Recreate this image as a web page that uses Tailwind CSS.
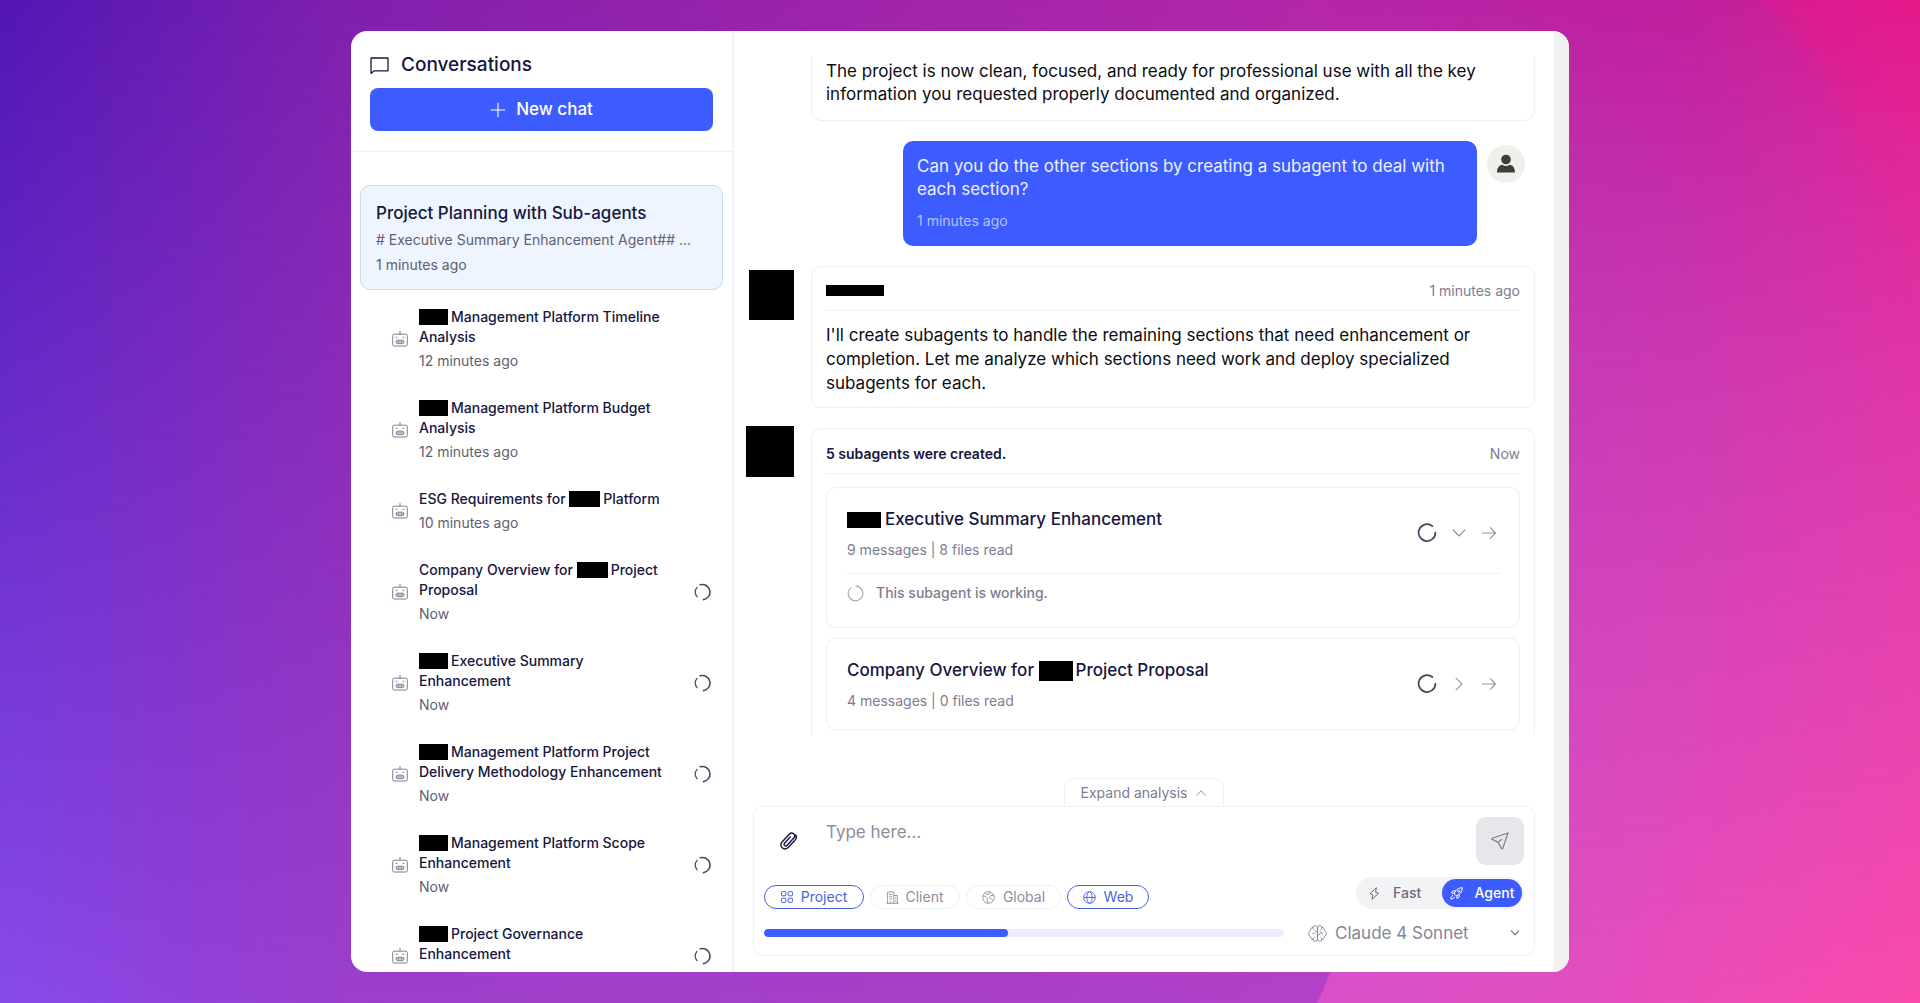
<!DOCTYPE html>
<html lang="en">
<head>
<meta charset="utf-8">
<meta name="viewport" content="width=device-width, initial-scale=1">
<title>Conversations</title>
<script src="https://cdn.jsdelivr.net/npm/@tailwindcss/browser@4"></script>
</head>
<body class="relative isolate h-screen overflow-hidden bg-[#a325ab] px-4 py-[31px] font-['Inter',sans-serif] text-[#16163f]">

<!-- Backdrop: violet to pink, brighter toward the bottom -->
<div class="absolute inset-0 -z-10 bg-[linear-gradient(to_right,#5216b4_0%,#681cb2_9%,#8020ae_18%,#9d24ab_43%,#b427a8_68%,#c0209f_88%,#cb2099_93%,#e41c8e_100%)]" aria-hidden="true">
  <div class="absolute top-0 right-0 h-[400px] w-[240px] bg-[radial-gradient(circle_at_-260px_330px,transparent_462px,#ea188870_488px)] mask-b-from-20% mask-b-to-100%"></div>
  <div class="absolute inset-0 bg-[linear-gradient(to_right,#874be9_0%,#9142da_10%,#9b3fcc_18%,#a840c6_50%,#b242c8_70%)] mask-[linear-gradient(transparent,black)]"></div>
  <div class="absolute inset-0 bg-[linear-gradient(to_right,#d850c8_69%,#e04fc0_81%,#ee4cb4_91%,#fa4aab_100%)] mask-[linear-gradient(transparent,black)] [clip-path:polygon(68.6%_100%,69.4%_96.5%,69.4%_0,100%_0,100%_100%)]"></div>
</div>

<svg class="hidden" aria-hidden="true">
  <symbol id="robot" viewBox="0 0 16 16" fill="none" stroke="currentColor">
    <rect x="0.7" y="3.2" width="14.6" height="11.8" rx="1.4"/>
    <path d="M8 0.3v2.9M4 6.3h1.2M10.8 6.3H12" stroke-linecap="round"/>
    <rect x="4" y="9.2" width="8" height="3.4" rx="1.5"/>
    <path d="M6.4 9.2v3.4M9.6 9.2v3.4M4 10.900h8" stroke-width="0.8"/>
  </symbol>
  <symbol id="spinner" viewBox="0 0 18 18" fill="none" stroke="currentColor" stroke-width="1.6" stroke-linecap="round">
    <path d="M6.2 1.8A7.6 7.6 0 1 1 9.5 16.6"/>
    <path d="M3.1 13.700A7.6 7.6 0 0 1 3 4.3" stroke-width="1.2"/>
  </symbol>
  <symbol id="spinner-open" viewBox="0 0 20 20" fill="none" stroke="currentColor" stroke-width="1.7" stroke-linecap="round">
    <path d="M15.4 3.2A8.4 8.4 0 1 0 18.4 9.6"/>
  </symbol>
  <symbol id="arrow" viewBox="0 0 16 16" fill="none" stroke="currentColor" stroke-width="1.1" stroke-linecap="round" stroke-linejoin="round">
    <path d="M1.5 8h13M9.3 2.6L14.5 8l-5.2 5.4"/>
  </symbol>
  <symbol id="chevron" viewBox="0 0 16 16" fill="none" stroke="currentColor" stroke-width="1.1" stroke-linecap="round" stroke-linejoin="round">
    <path d="M2.2 5L8 11l5.8-6"/>
  </symbol>
</svg>

<div class="mx-auto flex h-full w-full max-w-[1218px] overflow-hidden rounded-2xl bg-white">

  <!-- Sidebar -->
  <aside class="flex w-[383px] shrink-0 flex-col border-r-2 border-[#f2f2f4]">
    <header class="border-b border-[#eeeef1] px-[19px] pt-5 pb-5">
      <h1 class="flex items-center gap-3 text-[19px] leading-7 font-medium">
        <svg class="size-[19px]" viewBox="0 0 19 19" fill="none" stroke="currentColor" stroke-width="1.3" stroke-linejoin="round" aria-hidden="true"><path d="M1 2h17v12.800H4.200L1 17.400z"/></svg>
        Conversations
      </h1>
      <button type="button" class="mt-[9px] flex h-[43px] w-full items-center justify-center gap-2.5 rounded-lg bg-[#3c5cff] text-[17px] font-medium text-white">
        <svg class="size-4" viewBox="0 0 16 16" stroke="currentColor" stroke-width="1.1" aria-hidden="true"><path d="M8 .8v14.400M.8 8h14.400"/></svg>
        New chat
      </button>
    </header>

    <nav class="min-h-0 flex-1 overflow-hidden px-[9px] pt-[33px]" aria-label="Conversations">
      <a href="#" class="block rounded-[10px] border border-[#c5dcf0] bg-[#eef5ff] px-[15px] pt-[15px] pb-3.5">
        <span class="block text-[17px] leading-6 font-medium">Project Planning with Sub-agents</span>
        <span class="mt-[5px] block truncate text-sm text-[#5e6070]"># Executive Summary Enhancement Agent## ...</span>
        <span class="mt-[5px] block text-sm text-[#5e6070]">1 minutes ago</span>
      </a>
      <ul class="flex flex-col gap-[3px] pt-[5px]">
        <li><a href="#" class="flex items-center gap-[11px] py-3 pr-[11px] pl-8">
          <svg class="size-4 shrink-0 text-[#7e7e94]" aria-hidden="true"><use href="#robot"/></svg>
          <span class="flex-1 text-sm"><span class="block pr-8 font-medium"><span class="mr-[3px] inline-block h-4 w-[29px] bg-black align-[-3px]"></span>Management Platform Timeline Analysis</span><span class="mt-1 block text-[#5e6070]">12 minutes ago</span></span>
        </a></li>
        <li><a href="#" class="flex items-center gap-[11px] py-3 pr-[11px] pl-8">
          <svg class="size-4 shrink-0 text-[#7e7e94]" aria-hidden="true"><use href="#robot"/></svg>
          <span class="flex-1 text-sm"><span class="block pr-8 font-medium"><span class="mr-[3px] inline-block h-4 w-[29px] bg-black align-[-3px]"></span>Management Platform Budget Analysis</span><span class="mt-1 block text-[#5e6070]">12 minutes ago</span></span>
        </a></li>
        <li><a href="#" class="flex items-center gap-[11px] py-3 pr-[11px] pl-8">
          <svg class="size-4 shrink-0 text-[#7e7e94]" aria-hidden="true"><use href="#robot"/></svg>
          <span class="flex-1 text-sm"><span class="block pr-8 font-medium">ESG Requirements for <span class="mr-[3px] inline-block h-4 w-[31px] bg-black align-[-3px]"></span>Platform</span><span class="mt-1 block text-[#5e6070]">10 minutes ago</span></span>
        </a></li>
        <li><a href="#" class="flex items-center gap-[11px] py-3 pr-[11px] pl-8">
          <svg class="size-4 shrink-0 text-[#7e7e94]" aria-hidden="true"><use href="#robot"/></svg>
          <span class="flex-1 text-sm"><span class="block font-medium">Company Overview for <span class="mr-[3px] inline-block h-4 w-[31px] bg-black align-[-3px]"></span>Project Proposal</span><span class="mt-1 block text-[#5e6070]">Now</span></span>
          <svg class="size-[18px] shrink-0 text-[#4a4a62]" aria-hidden="true"><use href="#spinner"/></svg>
        </a></li>
        <li><a href="#" class="flex items-center gap-[11px] py-3 pr-[11px] pl-8">
          <svg class="size-4 shrink-0 text-[#7e7e94]" aria-hidden="true"><use href="#robot"/></svg>
          <span class="flex-1 text-sm"><span class="block font-medium"><span class="mr-[3px] inline-block h-4 w-[29px] bg-black align-[-3px]"></span>Executive Summary<br>Enhancement</span><span class="mt-1 block text-[#5e6070]">Now</span></span>
          <svg class="size-[18px] shrink-0 text-[#4a4a62]" aria-hidden="true"><use href="#spinner"/></svg>
        </a></li>
        <li><a href="#" class="flex items-center gap-[11px] py-3 pr-[11px] pl-8">
          <svg class="size-4 shrink-0 text-[#7e7e94]" aria-hidden="true"><use href="#robot"/></svg>
          <span class="flex-1 text-sm"><span class="block font-medium"><span class="mr-[3px] inline-block h-4 w-[29px] bg-black align-[-3px]"></span>Management Platform Project Delivery Methodology Enhancement</span><span class="mt-1 block text-[#5e6070]">Now</span></span>
          <svg class="size-[18px] shrink-0 text-[#4a4a62]" aria-hidden="true"><use href="#spinner"/></svg>
        </a></li>
        <li><a href="#" class="flex items-center gap-[11px] py-3 pr-[11px] pl-8">
          <svg class="size-4 shrink-0 text-[#7e7e94]" aria-hidden="true"><use href="#robot"/></svg>
          <span class="flex-1 text-sm"><span class="block font-medium"><span class="mr-[3px] inline-block h-4 w-[29px] bg-black align-[-3px]"></span>Management Platform Scope Enhancement</span><span class="mt-1 block text-[#5e6070]">Now</span></span>
          <svg class="size-[18px] shrink-0 text-[#4a4a62]" aria-hidden="true"><use href="#spinner"/></svg>
        </a></li>
        <li><a href="#" class="flex items-center gap-[11px] py-3 pr-[11px] pl-8">
          <svg class="size-4 shrink-0 text-[#7e7e94]" aria-hidden="true"><use href="#robot"/></svg>
          <span class="flex-1 text-sm"><span class="block font-medium"><span class="mr-[3px] inline-block h-4 w-[29px] bg-black align-[-3px]"></span>Project Governance<br>Enhancement</span><span class="mt-1 block text-[#5e6070]">Now</span></span>
          <svg class="size-[18px] shrink-0 text-[#4a4a62]" aria-hidden="true"><use href="#spinner"/></svg>
        </a></li>
      </ul>
    </nav>
  </aside>

  <!-- Chat -->
  <main class="flex min-w-0 flex-1 flex-col pt-[25px] pb-4">
    <section class="flex min-h-0 flex-1 flex-col gap-5 overflow-hidden pr-[19px] text-[17px] leading-[23px] text-[#0c0c12] *:shrink-0" aria-label="Messages">

      <article class="ml-[77px] rounded-b-[10px] border border-t-0 border-[#efeff1] px-3.5 pt-1 pb-3.5">
        <p>The project is now clean, focused, and ready for professional use with all the key information you requested properly documented and organized.</p>
      </article>

      <article class="flex items-start justify-end gap-2.5 pr-2.5">
        <div class="w-[574px] rounded-[10px] bg-[#3c5cff] px-3.5 pt-3.5 pb-[15px] text-[#eef1ff]">
          <p>Can you do the other sections by creating a subagent to deal with each section?</p>
          <p class="mt-2.5 text-sm text-[#b4c1ff]">1 minutes ago</p>
        </div>
        <span class="mt-1 flex size-[38px] items-center justify-center rounded-full bg-[#efefec]">
          <svg class="size-5" viewBox="0 0 20 20" fill="#3d3d39" aria-hidden="true"><circle cx="10" cy="5.500" r="4.800"/><path d="M1 18.500c0-4.800 2.300-7.400 5.300-7.700a6.500 6.500 0 0 0 7.400 0c3 .3 5.300 2.900 5.300 7.700z"/></svg>
        </span>
      </article>

      <article class="flex items-start">
        <div class="w-[77px] shrink-0 pt-1 pl-[15px]"><div class="h-[50px] w-[45px] bg-black"></div></div>
        <div class="min-w-0 flex-1 rounded-[10px] border border-[#efeff1] px-3.5 pt-[13px] pb-3">
          <header class="flex h-[31px] items-start justify-between border-b border-[#efeff1] text-sm leading-[21px]">
            <span class="mt-[5px] h-[11px] w-[58px] bg-black"></span>
            <time class="text-[#7d7d90]">1 minutes ago</time>
          </header>
          <p class="pt-3 leading-6">I'll create subagents to handle the remaining sections that need enhancement or completion. Let me analyze which sections need work and deploy specialized subagents for each.</p>
        </div>
      </article>

      <article class="flex items-start">
        <div class="-mt-0.5 w-[77px] shrink-0 pl-3"><div class="h-[51px] w-12 bg-black"></div></div>
        <div class="min-w-0 flex-1 rounded-t-[10px] border border-b-0 border-[#efeff1] px-3.5 pt-3.5 pb-10">
          <header class="flex h-[31px] items-start justify-between border-b border-[#efeff1] text-sm leading-[21px]">
            <h2 class="font-semibold text-[#16163f]">5 subagents were created.</h2>
            <time class="text-[#7d7d90]">Now</time>
          </header>

          <section class="mt-[13px] rounded-[10px] border border-[#efeff1] px-5 pt-[18px] pb-6">
            <div class="flex items-center justify-between">
              <div>
                <h3 class="leading-[26px] font-medium text-[#16163f]"><span class="mr-1 inline-block h-4 w-[34px] bg-black align-[-3px]"></span>Executive Summary Enhancement</h3>
                <p class="mt-2 text-sm text-[#7d7d90]">9 messages | 8 files read</p>
              </div>
              <div class="flex items-center gap-3.5 text-[#94949f]">
                <svg class="size-5 text-[#45455c]" aria-hidden="true"><use href="#spinner-open"/></svg>
                <button type="button" aria-label="Collapse"><svg class="size-4" aria-hidden="true"><use href="#chevron"/></svg></button>
                <button type="button" aria-label="Open subagent"><svg class="mr-0.5 size-4" aria-hidden="true"><use href="#arrow"/></svg></button>
              </div>
            </div>
            <p class="mt-[13px] flex items-center gap-3 border-t border-[#efeff1] pt-[9px] text-sm font-medium text-[#7d7d90]">
              <svg class="size-[17px] text-[#a5a5b2]" viewBox="0 0 18 18" fill="none" stroke="currentColor" stroke-width="1.200" stroke-linecap="round" aria-hidden="true"><path d="M9.500 1.200A7.800 7.800 0 1 1 4 3"/></svg>
              This subagent is working.
            </p>
          </section>

          <section class="mt-2.5 rounded-[10px] border border-[#efeff1] px-5 py-[18px]">
            <div class="flex items-center justify-between">
              <div>
                <h3 class="leading-[26px] font-medium text-[#16163f]">Company Overview for <span class="mr-[3px] inline-block h-5 w-[34px] bg-black align-[-5px]"></span>Project Proposal</h3>
                <p class="mt-2 text-sm text-[#7d7d90]">4 messages | 0 files read</p>
              </div>
              <div class="flex items-center gap-3.5 text-[#94949f]">
                <svg class="size-5 text-[#45455c]" aria-hidden="true"><use href="#spinner-open"/></svg>
                <button type="button" aria-label="Expand"><svg class="size-4 -rotate-90" aria-hidden="true"><use href="#chevron"/></svg></button>
                <button type="button" aria-label="Open subagent"><svg class="mr-0.5 size-4" aria-hidden="true"><use href="#arrow"/></svg></button>
              </div>
            </div>
          </section>
        </div>
      </article>
    </section>

    <!-- Composer -->
    <div class="flex flex-col items-center px-[19px] pt-[43px]">
      <button type="button" class="flex h-7 w-40 items-center justify-center gap-2 rounded-t-[10px] border border-b-0 border-[#efeff1] text-sm text-[#7d7d90]">
        Expand analysis
        <svg class="size-3 rotate-180" aria-hidden="true"><use href="#chevron"/></svg>
      </button>
      <form class="flex w-full flex-col gap-3 rounded-[10px] border border-[#efeff1] p-2.5">
        <div class="flex h-12">
          <button type="button" class="flex w-12 shrink-0 items-center justify-center" aria-label="Attach file">
            <svg class="size-5" viewBox="0 0 20 20" fill="none" stroke="currentColor" stroke-width="1.400" stroke-linecap="round" stroke-linejoin="round" aria-hidden="true"><path d="M17 9.300l-6.900 7.300a4.100 4.100 0 0 1-6.100-5.600L11.500 3a2.900 2.900 0 0 1 4.300 4l-6.900 7.400a1.600 1.600 0 0 1-2.400-2.200l5.700-6.200M17 9.300c1.400-1.600 1.700-3.800.6-5.300"/></svg>
          </button>
          <textarea class="min-w-0 flex-1 resize-none overflow-hidden pt-1 pl-3.5 text-[17px] leading-[23px] outline-none placeholder:text-[#8d8d9c]" placeholder="Type here..." aria-label="Message"></textarea>
          <button type="submit" class="flex w-12 items-center justify-center rounded-[10px] bg-[#e6e7ea] text-[#7d7d90]" aria-label="Send">
            <svg class="size-[18px]" viewBox="0 0 18 18" fill="none" stroke="currentColor" stroke-width="1.200" stroke-linejoin="round" stroke-linecap="round" aria-hidden="true"><path d="M17 1L1.200 6.200c-.5.2-.5.800-.1 1l6 3.200 3.600 6.300c.3.400.9.300 1-.1L17 1zM7.100 10.400l3.400-2.900"/></svg>
          </button>
        </div>
        <div class="flex items-end justify-between">
          <div class="flex gap-1.5 text-sm">
            <button type="button" aria-pressed="true" class="flex h-6 w-[100px] items-center justify-center gap-2 rounded-full border border-[#4a63dc] text-[#4a63dc]">
              <svg class="size-3" viewBox="0 0 12 12" fill="none" stroke="currentColor" aria-hidden="true"><rect x=".6" y=".6" width="4.200" height="4.200" rx=".6"/><rect x="7.200" y=".6" width="4.200" height="4.200" rx=".6"/><rect x=".6" y="7.200" width="4.200" height="4.200" rx=".6"/><rect x="7.200" y="7.200" width="4.200" height="4.200" rx=".6"/></svg>Project</button>
            <button type="button" aria-pressed="false" class="flex h-6 w-[90px] items-center justify-center gap-1.5 rounded-full border border-[#efeff1] text-[#8d8d9c]">
              <svg class="size-[13px]" viewBox="0 0 13 13" fill="none" stroke="currentColor" stroke-width=".9" aria-hidden="true"><path d="M.3 12.300h12.400M1.600 12.300V1h6.200v11.300M7.800 4.500h3.500v7.800M3.300 3.500h2.800M3.300 5.700h2.800M3.300 7.900h2.800M4.700 12.300v-2.200M9.600 6.500v1.300M9.600 9.300v1.300"/></svg>Client</button>
            <button type="button" aria-pressed="false" class="flex h-6 w-[95px] items-center justify-center gap-2 rounded-full border border-[#efeff1] text-[#8d8d9c]">
              <svg class="size-[13px]" viewBox="0 0 13 13" fill="none" stroke="currentColor" stroke-width=".9" stroke-linejoin="round" aria-hidden="true"><circle cx="6.500" cy="6.500" r="5.800"/><path d="M.9 5l2.600.3L5.600 7.400 5 9.200l1 2.900M3.300 1.700l1.600 2 2.400-.9.300-2M12 4.700l-3.100-.3-1.600 1.700 2 2 1.800 1.700"/></svg>Global</button>
            <button type="button" aria-pressed="true" class="flex h-6 w-[82px] items-center justify-center gap-2 rounded-full border border-[#4a63dc] text-[#4a63dc]">
              <svg class="size-[13px]" viewBox="0 0 13 13" fill="none" stroke="currentColor" stroke-width=".9" aria-hidden="true"><circle cx="6.500" cy="6.500" r="5.800"/><ellipse cx="6.500" cy="6.500" rx="2.600" ry="5.800"/><path d="M.7 6.500h11.600"/></svg>Web</button>
          </div>
          <fieldset class="flex h-8 items-center rounded-full bg-[#f2f3f5] pr-0.5 text-sm font-medium">
            <legend class="sr-only">Mode</legend>
            <label class="relative flex w-[86px] items-center gap-3 pl-3 text-[#6b6b7c]">
              <input type="radio" name="mode" class="absolute inset-0 appearance-none">
              <svg class="size-[13px]" viewBox="0 0 13 13" fill="none" stroke="currentColor" stroke-linejoin="round" aria-hidden="true"><path d="M8.400.7L2 6.700l2.800 1.200-.9 4.400 6.600-6L7.600 5.200z"/></svg>
              Fast
            </label>
            <label class="relative flex h-7 w-20 items-center justify-center gap-3 rounded-full bg-[#3c5cff] text-white">
              <input type="radio" name="mode" checked class="absolute inset-0 appearance-none">
              <svg class="size-[13px]" viewBox="0 0 13 13" fill="none" stroke="currentColor" stroke-linejoin="round" stroke-linecap="round" aria-hidden="true"><path d="M4.300 6.400C5.500 3 8 .8 12.300.7 12.200 5 10 7.500 6.600 8.700zM4.500 6.200L1.400 6 3.200 3.700l2.300.3M6.800 8.500l.2 3.100 2.300-1.800L9 7.500M2.700 8.400c-1.300.5-1.700 1.900-1.900 3.700 1.900-.2 3.300-.6 3.700-1.900"/><circle cx="8.700" cy="4.300" r=".9"/></svg>
              Agent
            </label>
          </fieldset>
        </div>
        <div class="flex h-6 items-center">
          <div class="h-2 flex-1 overflow-hidden rounded-full bg-[#ecebfd]" role="progressbar" aria-valuenow="47" aria-valuemin="0" aria-valuemax="100" aria-label="Context used">
            <div class="h-full rounded-full bg-[#3c5cff]" style="width:47%"></div>
          </div>
          <label class="relative ml-6 flex w-[216px] items-center text-[#85859a]">
            <span class="sr-only">Model</span>
            <svg class="size-[19px] shrink-0" viewBox="0 0 19 19" fill="none" stroke="currentColor" stroke-linecap="round" stroke-linejoin="round" aria-hidden="true"><path d="M9.500 3.300C9.100 1.900 8 1.500 7 1.600c-1.200.1-1.900.9-2 1.900-1.600 0-2.600 1.300-2.300 2.800C1.300 6.800.6 8.100.7 9.500s.8 2.600 2 3.100c-.2 1.600.9 2.900 2.400 2.900.3 1.300 1.200 1.900 2.200 1.900 1.200 0 2.200-.8 2.200-2.200zM9.500 3.300c.4-1.400 1.500-1.800 2.500-1.700 1.200.1 1.900.9 2 1.900 1.600 0 2.600 1.300 2.300 2.800 1.400.5 2.100 1.800 2 3.200s-.8 2.600-2 3.100c.2 1.600-.9 2.900-2.400 2.900-.3 1.300-1.200 1.900-2.200 1.900-1.200 0-2.200-.8-2.200-2.200zM9.500 8.200c-1 0-2-.4-2.400-1.200M9.500 11c1.300 0 2.400-.5 2.900-1.600M4.800 9.600c.9-.6 1.900-.4 2.500.4M14.200 9.600c-.3-1.100-1.100-1.800-2.200-1.900M5 3.500c0 .9.400 1.600 1.100 2M14 3.500c0 .9-.4 1.600-1.100 2M5.100 15.500c0-.9.300-1.600 1-2.100M13.900 15.500c0-.9-.3-1.600-1-2.100"/></svg>
            <select class="ml-2 w-full appearance-none text-[17px] leading-6 outline-none"><option>Claude 4 Sonnet</option></select>
            <svg class="pointer-events-none absolute right-1 size-2.5" viewBox="0 0 10 10" fill="none" stroke="currentColor" stroke-width="1.300" stroke-linecap="round" stroke-linejoin="round" aria-hidden="true"><path d="M1.400 3L5 6.800 8.600 3"/></svg>
          </label>
        </div>
      </form>
    </div>
  </main>

  <!-- Scrollbar track -->
  <div class="w-[15px] shrink-0 bg-[#f1f1f1]" aria-hidden="true"></div>
</div>
</body>
</html>
